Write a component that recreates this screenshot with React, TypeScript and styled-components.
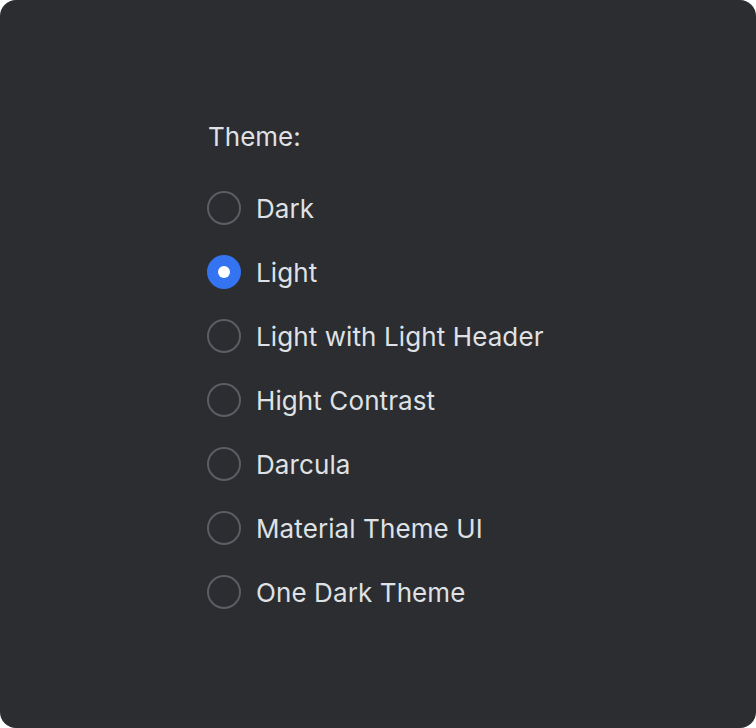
import React, { useState } from "react";
import styled, { createGlobalStyle } from "styled-components";

const Global = createGlobalStyle`
  html, body { margin: 0; padding: 0; background: #ffffff; }
  * { box-sizing: border-box; }
`;

const Card = styled.div`
  width: 756px;
  height: 728px;
  background: #2b2d30;
  border-radius: 16px;
  display: flex;
  flex-direction: column;
  padding: 121px 0 0 207px;
  font-family: Inter, "Noto Sans", sans-serif;
  color: #dfe1e5;
`;

const Title = styled.div`
  font-size: 26px;
  line-height: 32px;
  padding-left: 1px;
  margin-bottom: 38px;
`;

const List = styled.div`
  display: flex;
  flex-direction: column;
  gap: 30px;
`;

const Row = styled.label`
  display: flex;
  align-items: center;
  gap: 15px;
  height: 34px;
  cursor: pointer;
  font-size: 26px;
  letter-spacing: 0.1px;
`;

const Radio = styled.span<{ $checked: boolean }>`
  width: 34px;
  height: 34px;
  border-radius: 50%;
  flex: none;
  display: flex;
  align-items: center;
  justify-content: center;
  border: ${(p) => (p.$checked ? "none" : "2px solid #5a5d63")};
  background: ${(p) => (p.$checked ? "#3574f0" : "transparent")};
`;

const Dot = styled.span`
  width: 12px;
  height: 12px;
  border-radius: 50%;
  background: #ffffff;
`;

const options = [
  "Dark",
  "Light",
  "Light with Light Header",
  "Hight Contrast",
  "Darcula",
  "Material Theme UI",
  "One Dark Theme",
];

export default function App() {
  const [sel, setSel] = useState("Light");
  return (
    <>
      <Global />
      <Card>
        <Title>Theme:</Title>
        <List>
          {options.map((o) => (
            <Row key={o} onClick={() => setSel(o)}>
              <Radio $checked={sel === o}>{sel === o && <Dot />}</Radio>
              {o}
            </Row>
          ))}
        </List>
      </Card>
    </>
  );
}
